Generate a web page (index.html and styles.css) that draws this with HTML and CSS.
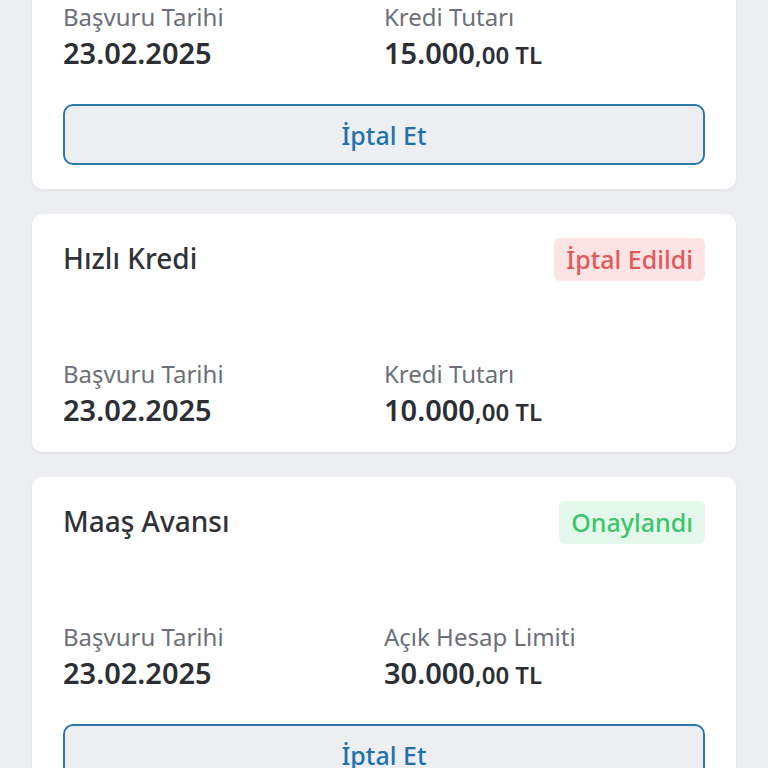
FILE: index.html
```html
<!DOCTYPE html>
<html lang="tr">
<head>
    <meta charset="UTF-8">
    <meta name="viewport" content="width=device-width, initial-scale=1.0">
    <title>Başvurularım</title>
    <link rel="stylesheet" href="styles.css">
</head>
<body>
    <div class="list">
        <div class="card">
            <div class="card-head">
                <div class="title">İhtiyaç Kredisi</div>
                <div class="badge badge-wait">Beklemede</div>
            </div>
            <div class="info">
                <div class="field">
                    <div class="label">Başvuru Tarihi</div>
                    <div class="value">23.02.2025</div>
                </div>
                <div class="field">
                    <div class="label">Kredi Tutarı</div>
                    <div class="value">15.000<span class="cents">,00 TL</span></div>
                </div>
            </div>
            <button class="cancel">İptal Et</button>
        </div>

        <div class="card">
            <div class="card-head">
                <div class="title">Hızlı Kredi</div>
                <div class="badge badge-cancel">İptal Edildi</div>
            </div>
            <div class="info">
                <div class="field">
                    <div class="label">Başvuru Tarihi</div>
                    <div class="value">23.02.2025</div>
                </div>
                <div class="field">
                    <div class="label">Kredi Tutarı</div>
                    <div class="value">10.000<span class="cents">,00 TL</span></div>
                </div>
            </div>
        </div>

        <div class="card">
            <div class="card-head">
                <div class="title">Maaş Avansı</div>
                <div class="badge badge-ok">Onaylandı</div>
            </div>
            <div class="info">
                <div class="field">
                    <div class="label">Başvuru Tarihi</div>
                    <div class="value">23.02.2025</div>
                </div>
                <div class="field">
                    <div class="label">Açık Hesap Limiti</div>
                    <div class="value">30.000<span class="cents">,00 TL</span></div>
                </div>
            </div>
            <button class="cancel">İptal Et</button>
        </div>
    </div>
</body>
</html>
```

FILE: styles.css
```css
/* application list */
body {
    margin: 0;
    background-color: #eceef2;
    font-family: "Noto Sans", sans-serif;
    overflow: hidden;
}

.list {
    display: flex;
    flex-direction: column;
    gap: 25px;
    padding: 0 32px;
    margin-top: -143px;
}

.card {
    background-color: #fff;
    border-radius: 10px;
    padding: 24px 31px 25px;
    box-shadow: 0 1px 3px rgba(0, 0, 0, 0.08);
}

.card-head {
    display: flex;
    justify-content: space-between;
    align-items: center;
    height: 43px;
}

.title {
    font-size: 28px;
    font-weight: 500;
    line-height: 36px;
    padding-bottom: 3px;
    color: #2f3338;
}

.badge {
    font-size: 25px;
    font-weight: 500;
    line-height: 43px;
    padding: 0 12px;
    border-radius: 6px;
}

.badge-cancel {
    background-color: #fde4e4;
    color: #e4575c;
}

.badge-ok {
    background-color: #e3f8ea;
    color: #3ec46d;
}

.badge-wait {
    background-color: #fdf1dc;
    color: #d8921c;
}

.info {
    display: grid;
    grid-template-columns: 1fr 1fr;
    margin-top: 78px;
}

.label {
    font-size: 24px;
    line-height: 30px;
    color: #6b7079;
}

.value {
    height: 34px;
    font-size: 29px;
    font-weight: 600;
    line-height: 34px;
    margin-top: 4px;
    color: #2b2f33;
}

.cents {
    font-size: 24px;
    line-height: 1;
}

.cancel {
    display: block;
    width: 100%;
    height: 61px;
    margin-top: 34px;
    margin-bottom: -1px;
    background-color: #eceef2;
    border: 2px solid #2a79ad;
    border-radius: 10px;
    font-family: inherit;
    font-size: 25px;
    font-weight: 500;
    color: #1f72ab;
}
```
